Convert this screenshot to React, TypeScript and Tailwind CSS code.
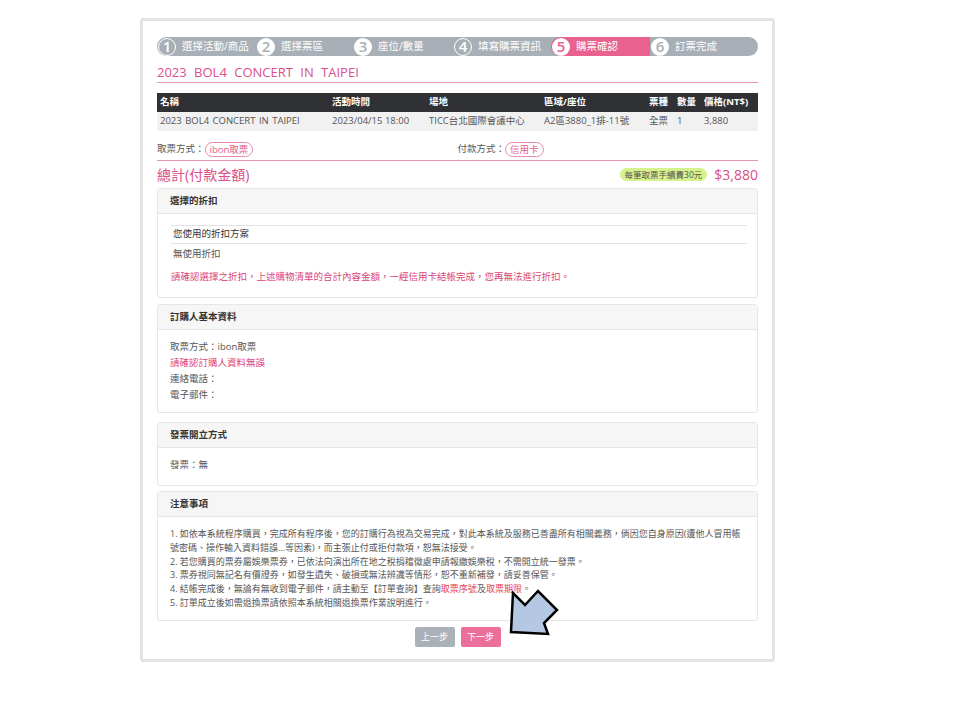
import React from 'react'

// ─── Data ─────────────────────────────────────────────────────────────────────

const STEPS = [
  { n: 1, label: '選擇活動/商品', w: 'w-[99px]', outline: true },
  { n: 2, label: '選擇票區', w: 'w-[97px]', outline: false },
  { n: 3, label: '座位/數量', w: 'w-[100px]', outline: false },
  { n: 4, label: '填寫購票資訊', w: 'w-[98px]', outline: true },
  { n: 5, label: '購票確認', w: 'w-[99px]', outline: false, active: true },
  { n: 6, label: '訂票完成', w: 'flex-1', outline: false },
]

const COLS = 'grid grid-cols-[172px_97px_115px_105px_28px_27px_1fr] pl-[3px] items-center h-[19px]'

// ─── Pieces ───────────────────────────────────────────────────────────────────

function StepBar() {
  return (
    <div className="flex h-[19px] rounded-full bg-[#a9afb6] overflow-hidden">
      {STEPS.map(s => (
        <div
          key={s.n}
          className={`${s.w} flex items-center gap-[6px] pl-[1px] ${s.active ? 'bg-[#e9618f] rounded-l-full' : ''}`}
        >
          <span
            className={`w-[18px] h-[18px] rounded-full flex items-center justify-center text-[15px] leading-none font-semibold ${
              s.outline
                ? 'border-[1.5px] border-white text-white'
                : s.active
                  ? 'bg-white text-[#e9618f]'
                  : 'bg-white text-[#a9afb6]'
            }`}
          >
            {s.n}
          </span>
          <span className="text-[10.5px] text-white">{s.label}</span>
        </div>
      ))}
    </div>
  )
}

function Pill({ children }: { children: React.ReactNode }) {
  return (
    <span className="inline-flex items-center h-[15px] px-[4px] rounded-full border border-[#e98aab] text-[#e0608d] text-[9.5px] leading-none">
      {children}
    </span>
  )
}

function Card({ title, className, children }: { title: string; className?: string; children: React.ReactNode }) {
  return (
    <div className={`border border-[#e6e6e6] rounded-[3px] ${className ?? ''}`}>
      <div className="h-[25px] flex items-center px-[12px] bg-[#f6f6f6] border-b border-[#e6e6e6] text-[9.5px] font-bold text-[#333]">
        {title}
      </div>
      {children}
    </div>
  )
}

// ─── Main ─────────────────────────────────────────────────────────────────────

export default function App() {
  return (
    <div className="relative w-full h-[720px] bg-white font-['Open_Sans','Noto_Sans_CJK_TC',sans-serif] text-[#555]">
      <div className="absolute left-[140px] top-[18px] w-[635px] h-[644px] border-[3px] border-[#e3e3e3] rounded-[3px] px-[14px] pt-[16px]">
        <StepBar />

        {/* Title */}
        <div className="mt-[7px] h-[20px] flex items-center border-b border-[#e795b3] text-[13px] text-[#d9508a] [word-spacing:4px]">
          2023 BOL4 CONCERT IN TAIPEI
        </div>

        {/* Order table */}
        <div className="mt-[10px] text-[9.5px]">
          <div className={`${COLS} bg-[#303135] text-white font-bold`}>
            <span>名稱</span>
            <span>活動時間</span>
            <span>場地</span>
            <span>區域/座位</span>
            <span>票種</span>
            <span>數量</span>
            <span>價格(NT$)</span>
          </div>
          <div className={`${COLS} bg-[#f1f1f1] text-[#555]`}>
            <span className="[word-spacing:1px]">2023 BOL4 CONCERT IN TAIPEI</span>
            <span>2023/04/15 18:00</span>
            <span>TICC台北國際會議中心</span>
            <span>A2區3880_1排-11號</span>
            <span>全票</span>
            <span>1</span>
            <span>3,880</span>
          </div>
        </div>

        {/* Pickup & payment */}
        <div className="mt-[8px] h-[22px] grid grid-cols-2 items-center text-[9.5px] border-b border-[#e795b3]">
          <div className="flex items-center">取票方式：<Pill>ibon取票</Pill></div>
          <div className="flex items-center">付款方式：<Pill>信用卡</Pill></div>
        </div>

        {/* Total */}
        <div className="h-[27px] flex items-center justify-between">
          <span className="text-[14px] text-[#d9508a]">總計(付款金額)</span>
          <div className="flex items-center gap-[7px]">
            <span className="h-[13px] px-[5px] rounded-full bg-[#d5f28c] text-[8.5px] leading-[13px] text-[#555]">每筆取票手續費30元</span>
            <span className="text-[14px] text-[#d9508a]">$3,880</span>
          </div>
        </div>

        {/* Discount */}
        <Card title="選擇的折扣" className="h-[110px]">
          <div className="pl-[13px] pr-[10px] pt-[11px] text-[9.5px]">
            <div className="h-[19px] flex items-center px-[2px] border-t border-b border-[#e3e3e3] text-[#333]">您使用的折扣方案</div>
            <div className="h-[20px] flex items-center px-[2px]">無使用折扣</div>
            <div className="mt-[6px] text-[#d9467a]">請確認選擇之折扣，上述購物清單的合計內容金額，一經信用卡結帳完成，您再無法進行折扣。</div>
          </div>
        </Card>

        {/* Buyer */}
        <Card title="訂購人基本資料" className="mt-[6px] h-[109px]">
          <div className="px-[12px] pt-[9px] text-[9.5px] leading-[16px]">
            <div>取票方式：ibon取票</div>
            <div className="text-[#e0457b]">請確認訂購人資料無誤</div>
            <div>連絡電話：</div>
            <div>電子郵件：</div>
          </div>
        </Card>

        {/* Invoice */}
        <Card title="發票開立方式" className="mt-[9px] h-[64px]">
          <div className="px-[12px] pt-[9px] text-[9.5px] leading-[16px]">發票：無</div>
        </Card>

        {/* Notes */}
        <Card title="注意事項" className="mt-[5px] h-[130px]">
          <div className="px-[12px] pt-[10px] text-[9px] leading-[13.8px]">
            <div className="whitespace-nowrap">
              1. 如依本系統程序購買，完成所有程序後，您的訂購行為視為交易完成，對此本系統及服務已善盡所有相關義務，倘因您自身原因(遭他人冒用帳
              <br />
              號密碼、操作輸入資料錯誤...等因素)，而主張止付或拒付款項，恕無法接受。
            </div>
            <div>2. 若您購買的票券屬娛樂票券，已依法向演出所在地之稅捐稽徵處申請報繳娛樂稅，不需開立統一發票。</div>
            <div>3. 票券視同無記名有價證券，如發生遺失、破損或無法辨識等情形，恕不重新補發，請妥善保管。</div>
            <div>
              4. 結帳完成後，無論有無收到電子郵件，請主動至【訂單查詢】查詢<span className="text-[#e8404f]">取票序號</span>及<span className="text-[#e8404f]">取票期限</span>。
            </div>
            <div>5. 訂單成立後如需退換票請依照本系統相關退換票作業說明進行。</div>
          </div>
        </Card>

        {/* Buttons */}
        <div className="mt-[6px] flex justify-center gap-[6px]">
          <button className="w-[40px] h-[20px] rounded-[2px] bg-[#abb1b8] text-white text-[9px]">上一步</button>
          <button className="w-[40px] h-[20px] rounded-[2px] bg-[#ec6e9a] text-white text-[9px]">下一步</button>
        </div>
      </div>

      {/* Pointer arrow overlay */}
      <svg className="absolute left-[505px] top-[585px]" width="60" height="55" viewBox="0 0 60 55">
        <polygon
          points="6,47 8,8 20,20 33,6 52,25 39,38 43,49"
          fill="#b4c8e4"
          stroke="#000"
          strokeWidth="2.5"
          strokeLinejoin="miter"
        />
      </svg>
    </div>
  )
}
